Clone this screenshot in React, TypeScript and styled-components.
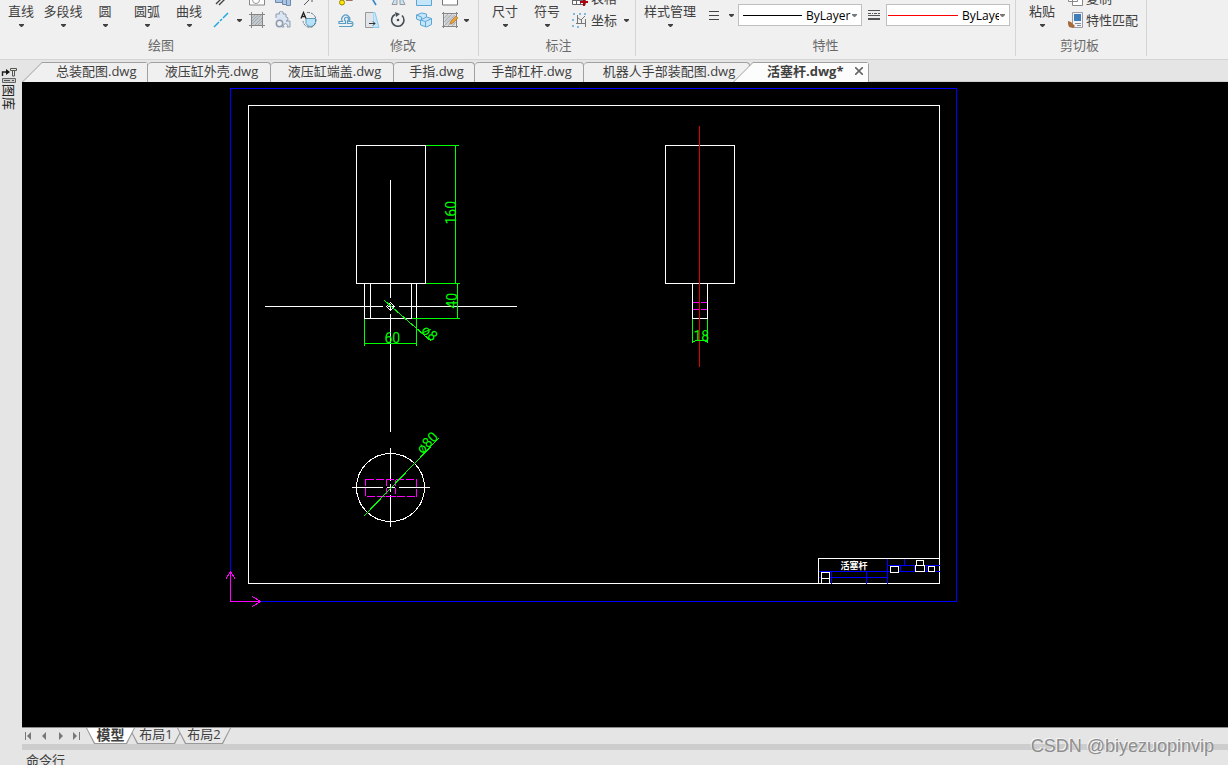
import React from 'react';
import styled, { createGlobalStyle } from 'styled-components';

const GlobalStyle = createGlobalStyle`
  *, *::before, *::after { box-sizing: border-box; }
  body {
    margin: 0;
    overflow: hidden;
    background: #e5e5e5;
    font-family: "Open Sans", "Noto Sans CJK SC", sans-serif;
    font-size: 13px;
    color: #404040;
  }
  button, select { font: inherit; color: inherit; }
  button { border: 0; margin: 0; padding: 0; background: none; white-space: nowrap; }
  svg { display: block; flex: none; }
`;

const Window = styled.div`
  position: relative;
  display: flex;
  flex-direction: column;
  height: 100vh;
  overflow: hidden;
`;

/* ---------- ribbon ---------- */

const Ribbon = styled.header`
  display: flex;
  flex: none;
  height: 60px;
  overflow: hidden;
  background: #f0f0f0;
  border-bottom: 1px solid #d4d4d4;
`;

const Group = styled.section<{ $left?: number; $right?: number }>`
  position: relative;
  display: flex;
  flex-direction: column;
  justify-content: flex-end;
  height: 56px;
  padding: 0 ${p => p.$right ?? 5}px 0 ${p => p.$left ?? 5}px;
  border-right: 1px solid #d4d4d4;
`;

const GroupBody = styled.div`
  display: flex;
  flex: none;
  align-items: flex-end;
  height: 34px;
`;

const GroupTitle = styled.h2`
  flex: none;
  margin: 0;
  height: 22px;
  font-size: 13px;
  font-weight: 400;
  line-height: 22px;
  text-align: center;
  color: #6a6a6a;
`;

const BigButton = styled.button<{ $wide?: boolean }>`
  display: flex;
  flex: none;
  flex-direction: column;
  align-items: center;
  width: ${p => (p.$wide ? 58 : 42)}px;
  height: 32px;
  line-height: 18px;
`;

const CaretBox = styled.span`
  display: flex;
  flex: none;
  align-items: center;
  justify-content: center;
  width: 14px;
  height: 10px;
`;

const IconRows = styled.div<{ $gap?: number }>`
  display: flex;
  flex-direction: column;
  flex: none;
  padding-bottom: 3px;
  padding-left: ${p => p.$gap ?? 0}px;
`;

const IconRow = styled.div`
  display: flex;
  align-items: center;
  height: 22px;
`;

const IconButton = styled.button`
  display: flex;
  align-items: center;
  justify-content: center;
  width: 26px;
  height: 22px;
`;

const LineButton = styled(IconButton)`
  width: 34px;
  gap: 2px;
  padding-left: 4px;
`;

const HatchButton = styled(IconButton)`
  width: 36px;
  padding-left: 4px;
`;

const LabelButton = styled.button`
  display: flex;
  align-items: center;
  gap: 2px;
  height: 22px;
  line-height: 18px;
`;

const Properties = styled.div`
  display: flex;
  align-items: center;
  height: 22px;
  margin-bottom: 8px;
`;

const SmallTool = styled.button<{ $width: number }>`
  display: flex;
  align-items: center;
  justify-content: center;
  gap: 5px;
  width: ${p => p.$width}px;
  height: 22px;
`;

const StyleTool = styled(SmallTool)`
  justify-content: flex-end;
`;

const Combo = styled.label`
  display: flex;
  align-items: center;
  width: 124px;
  height: 22px;
  overflow: hidden;
  background: #fff;
  border: 1px solid #bfbfbf;
`;

const Swatch = styled.span<{ $color: string; $width: number }>`
  flex: none;
  width: ${p => p.$width}px;
  height: 1px;
  margin: 0 4px 0 ${p => (p.$width > 60 ? 1 : 4)}px;
  background: ${p => p.$color};
`;

const Select = styled.select`
  flex: 1;
  min-width: 0;
  height: 20px;
  margin-right: -4px;
  padding: 0;
  appearance: none;
  border: 0;
  background: none;
  font-size: 12px;
  color: #000;
  text-overflow: clip;
`;

const Caret = ({ color = '#404040' }: { color?: string }) => (
  <CaretBox>
    <svg width="5" height="3" viewBox="0 0 5 3" fill={color} aria-hidden="true">
      <path d="M0 0h5v1L3 3H2L0 1z" />
    </svg>
  </CaretBox>
);

const Icon = ({ children }: { children: React.ReactNode }) => (
  <svg width="18" height="18" viewBox="0 0 18 18" fill="none" stroke="#5f6670" aria-hidden="true">
    {children}
  </svg>
);

const blue = '#5ba6d6';
const pale = '#c5e6fa';

const icons = {
  multiline: <Icon><path d="M4 15L14 5M7 16L16 7" stroke="#444" strokeWidth="1.4" /></Icon>,
  region: <Icon><path d="M1.500 2.500h15v13.500h-15z" fill="#fff" stroke="#888" /><circle cx="8" cy="11" r="3.500" stroke="#999" /></Icon>,
  helix: <Icon><path d="M1.500 5.500h7v8h-7zM8.500 8.500h4v7h-4zM12.500 8.500h4v8h-4z" fill="#a9c5e6" stroke="#6d88a8" /></Icon>,
  ray: <Icon><path d="M4 16l8-8M7 8h5v5" stroke="#555" /></Icon>,
  xline: <Icon><path d="M2 16l5-5M8 10l2-2M11 7l5-5" stroke="#22a7e0" strokeWidth="1.500" /></Icon>,
  hatch: (
    <Icon>
      <path d="M4 4h10v10H4z" fill="#c4c9ce" stroke="none" />
      <path d="M4 7l3-3M4 10l6-6M4 13l9-9M7 14l7-7M10 14l4-4" stroke="#a3a9b0" />
      <path d="M3.500 1v16M14.500 1v16M1 3.500h16M1 14.500h16" stroke="#858585" />
    </Icon>
  ),
  cloud: (
    <Icon>
      <path d="M2 7V3h3.500a2 2 0 1 1 3.500 0h3v3a2 2 0 1 1 0 4h4v6h-3a2 2 0 1 0-3 0H8" fill="#dce5f2" stroke="#8c9bb0" />
      <circle cx="5.500" cy="12.500" r="3.200" fill="#f0f0f0" stroke="#8c9bb0" strokeWidth="1.500" />
    </Icon>
  ),
  boundary: (
    <Icon>
      <path d="M6 7.500h9.500v4a5 5 0 0 1-9.500 1z" fill="#b4e2fb" stroke="#5f9cb7" />
      <path d="M7 1.500a8 8 0 0 1 9 7 8 8 0 0 1-4 7.500 7 7 0 0 1-9-6" stroke="#5f7787" strokeDasharray="3 1" />
      <path d="M1 7.500l2.500-6L6 7.500M2 5.500h3" stroke="#222" strokeWidth="1.300" />
    </Icon>
  ),
  move: <Icon><path d="M9 11h6V6h-3" stroke="#843" strokeWidth="1.300" /><circle cx="5" cy="13.500" r="2.500" fill="#ffe500" stroke="#998500" /></Icon>,
  trim: <Icon><path d="M7 6l6 10" stroke="#3186c9" strokeWidth="1.600" /></Icon>,
  mirror: <Icon><path d="M8 5v10.500H3zM11 5v10.500h5z" fill={pale} stroke="#999" /></Icon>,
  array: <Icon><path d="M1.500 2.500h15v14h-15z" fill={pale} stroke={blue} /></Icon>,
  copy: <Icon><path d="M1.500 2.500h15v13.500h-15z" fill="#fff" stroke="#777" /></Icon>,
  offset: (
    <Icon>
      <path d="M2 15.500h11.500a2.500 2.500 0 0 0 0-5H12a4 4 0 1 0-6.500 0H2v2h6.500V10a2 2 0 1 1 2 0v2.500H15" stroke="#579dc5" strokeWidth="1.200" />
    </Icon>
  ),
  stretch: <Icon><path d="M10 1.500h2l4 15h-6z" fill={pale} stroke="#8bcbed" /><path d="M10 1.500H2.500v15H10" fill="#e1e4e8" stroke="#999" /><path d="M6 12.500h6m-2-2l2 2-2 2" stroke="#333" /></Icon>,
  rotate: <Icon><path d="M6 3.500a6.200 6.200 0 1 0 7 1" stroke="#444c55" strokeWidth="1.600" /><path d="M6 1l5 2-4 3z" fill="#444c55" stroke="none" /><circle cx="9" cy="9" r="1.300" fill="#444c55" stroke="none" /></Icon>,
  explode: (
    <Icon>
      <path d="M1.500 4l5-2 5 1v5l-5 2-5-2z" fill={pale} stroke={blue} />
      <path d="M5.500 9l6-3 5 1.500v6l-5 2.500-6-2z" fill={pale} stroke={blue} />
      <path d="M5.500 9l5 1.500 6-3M10.500 10.500V16M1.500 4l5 2v3" stroke={blue} />
    </Icon>
  ),
  editHatch: (
    <Icon>
      <path d="M3.500 3.500h11v11h-11z" fill="#c9ccd0" stroke="none" />
      <path d="M3 7l4-4M3 11l8-8M3 15L14 4M7 15l8-8M11 15l4-4" stroke="#aeb3b8" />
      <path d="M2.500 1v16M15.500 1v16M1 2.500h16M1 15.500h16" stroke="#858585" />
      <path d="M9 13l1-3 5-5 2 2-5 5z" fill="#e9a13b" stroke="#ad6b19" strokeWidth=".6" />
    </Icon>
  ),
  table: <Icon><path d="M1.500 2.500h13v13h-13zM1 6.500h13M1 11.500h13M5.500 3v12M9.500 3v12" fill="#fff" stroke="#666" /><path d="M13 9v8M9 13h8" stroke="#b00010" strokeWidth="2" /></Icon>,
  coord: <Icon><path d="M6.500 4v9M5 12.500h10M14.500 8v8M7 7l3 2 4-4M10.500 9v3" stroke="#777" /><path d="M2 3h2M8 3h2M13 3h3M2 8v2M2 14v2M6 16h2" stroke={blue} strokeWidth="1.500" strokeDasharray="2 1" /></Icon>,
  clone: <Icon><path d="M2.500 1.500h9v11h-9zM6.500 5.500h10v11h-10z" fill="#fff" stroke="#888" /></Icon>,
  match: (
    <Icon>
      <path d="M6.500 1.500h10v15h-10z" fill="#f2f5f8" stroke="#9a9aa4" />
      <path d="M8 3h7v7H8z" fill="#3f7dba" stroke="none" />
      <path d="M9 12.500h6M11 14.500h4" stroke="#889" />
      <path d="M2 10l3 1 4 4-2 2-4-1-1-3z" fill="#a86a38" stroke="none" />
    </Icon>
  ),
};

/* ---------- workspace ---------- */

const Workspace = styled.div`
  display: flex;
  flex: 1;
  min-height: 0;
`;

const SideBar = styled.aside`
  flex: none;
  width: 22px;
  padding: 6px 1px;
  background: #e5e5e5;
`;

const SideButton = styled.button`
  display: flex;
  flex-direction: column;
  align-items: center;
  width: 16px;
  font-size: 13px;
  line-height: 16px;
  color: #222;
`;

const SideLabel = styled.span`
  writing-mode: vertical-rl;
  text-orientation: sideways;
`;

const Main = styled.div`
  display: flex;
  flex: 1;
  flex-direction: column;
  min-width: 0;
`;

const DocTabs = styled.nav`
  display: flex;
  flex: none;
  height: 22px;
  padding-top: 2px;
  background: #e5e5e5;
  border-bottom: 1px solid #d0d0d0;
`;

const DocTab = styled.button<{ $width: number }>`
  flex: none;
  width: ${p => p.$width}px;
  height: 20px;
  padding: 0 0 2px 5px;
  line-height: 17px;
  text-align: center;
  background: #f0f0f0;
  border: 1px solid #a0a0a0;
  border-width: 1px 1px 0 0;
  border-radius: 4px 4px 0 0;
`;

/* Tab with a slanted left edge: a grey shape with the tab colour laid one pixel inside it. */
const SlantTab = styled(DocTab)<{ $active?: boolean }>`
  position: relative;
  z-index: ${p => (p.$active ? 1 : 0)};
  margin-left: ${p => (p.$active ? -17 : 0)}px;
  padding-left: 34px;
  font-weight: ${p => (p.$active ? 700 : 400)};
  border: 0;
  border-radius: 0;
  background: #a0a0a0;
  clip-path: polygon(0 100%, 20px 0, calc(100% - 2px) 0, 100% 2px, 100% 100%);
  &::before {
    content: "";
    position: absolute;
    inset: 1px 1px 0 1px;
    background: ${p => (p.$active ? '#fcfcfc' : '#f0f0f0')};
    clip-path: polygon(0 100%, 19px 0, 100% 0, 100% 100%);
  }
`;

const TabText = styled.span`
  position: relative;
  display: flex;
  align-items: center;
  justify-content: space-between;
  padding-right: 6px;
`;

const Canvas = styled.main`
  flex: 1;
  min-height: 0;
  background: #000;
`;

const Drawing = styled.svg`
  width: 100%;
  height: 100%;
  font-family: "Liberation Sans Narrow", Roboto, "Noto Sans CJK SC", sans-serif;
  font-size: 14px;
  font-weight: 400;
`;

const LayoutBar = styled.nav`
  display: flex;
  flex: none;
  height: 17px;
  border-top: 1px solid #8a8a8a;
  background: #e5e5e5;
`;

const NavButtons = styled.div`
  display: flex;
  align-items: center;
  width: 64px;
`;

const NavButton = styled.button`
  display: flex;
  width: 16px;
  padding-left: 2px;
`;

const LayoutTab = styled.button<{ $active?: boolean }>`
  position: relative;
  z-index: ${p => (p.$active ? 1 : 0)};
  flex: none;
  width: ${p => (p.$active ? 49 : 54)}px;
  height: 16px;
  margin-left: ${p => (p.$active ? 0 : -6)}px;
  padding-bottom: 3px;
  font-weight: ${p => (p.$active ? 700 : 400)};
  font-size: ${p => (p.$active ? 14 : 13)}px;
  line-height: 13px;
  text-align: center;
  background: #999;
  clip-path: polygon(0 0, 100% 0, calc(100% - 8px) 100%, 8px 100%);
  &::before {
    content: "";
    position: absolute;
    inset: 0 1px 1px 1px;
    background: ${p => (p.$active ? '#fff' : '#e8e8e8')};
    clip-path: polygon(0 0, 100% 0, calc(100% - 8px) 100%, 8px 100%);
  }
  span { position: relative; }
`;

const Splitter = styled.div`
  flex: none;
  height: 6px;
  background: #cdcdcd;
`;

const CommandLine = styled.footer`
  flex: none;
  height: 15px;
  padding: 1px 4px 0;
  overflow: hidden;
  line-height: 19px;
`;

const Watermark = styled.div`
  position: absolute;
  right: 14px;
  bottom: 9px;
  z-index: 2;
  font-family: "Liberation Sans", sans-serif;
  font-size: 18px;
  line-height: 20px;
  color: #8e8e8e;
  text-shadow: -1px -1px 0 #f6f6f6;
`;

const PartDrawing = () => (
  <Drawing
    viewBox="21.5 81.5 1206 645"
    preserveAspectRatio="xMinYMin meet"
    fill="none"
    stroke="#fff"
    strokeWidth="1"
    shapeRendering="crispEdges"
    role="img"
    aria-label="活塞杆"
  >
    {/* sheet frame */}
    <path d="M230 88H956V601H230z" stroke="#00f" />
    <path d="M248 105H939V583H248z" />

    {/* front view */}
    <path d="M356 145H425V283H356zM364 283V318M370 283V318M411 283V318M416 283V318M364 318H416" />
    <path d="M390 179V297M390 313V431M264 306H382M398 306H516" />
    <path d="M386 306L390 302L394 306L390 310zM387 306H394M390 303V310" />
    <g stroke="#0f0">
      <path d="M425 145H458M425 283H459M455 145V283M457 283V318M411 318H459M364 318V345M416 318V345M364 343H416" />
      <path d="M384 300L431 341" />
    </g>

    {/* top view */}
    <circle cx="390" cy="487" r="34" />
    <path d="M351 487H382M386 487H394M398 487H429M390 447V480M390 483V491M390 494V526" />
    <path d="M365 479H416V496H365z" stroke="#f0f" strokeDasharray="8 2" />
    <path d="M386 479V496M395 479V496" stroke="#f0f" strokeDasharray="6 2" />
    <path d="M363 516L438 438" stroke="#0f0" />

    {/* side view */}
    <path d="M665 145H734V283H665zM692 283V318H707V283" />
    <path d="M699 125V366" stroke="#e00000" />
    <path d="M692 302H698M700 302H706M692 309H698M700 309H706" stroke="#f0f" />
    <path d="M692 318V342M707 318V342M692 341H694L695 340H704L705 341H707" stroke="#0f0" />

    {/* title block */}
    <path d="M818 571H887M818 577H887M831 571V583M866 571V583M887 558V583M904 558V565M887 565H939M887 571H939M900 565V571M914 565V571M926 565V571" stroke="#00f" />
    <path d="M818 583V558H939" />
    <path d="M821 572H829V583H821zM821 578H829M890 566H898V572H890zM916 560H923V565H916zM915 565H924V571H915zM928 566H934V571H928z" fill="#000" />

    {/* coordinate axes */}
    <path d="M230 571V601H260M225 579L230 571L235 579M252 596L260 601L252 606" stroke="#f0f" />

    <g fill="#0f0" stroke="none">
      <text x="384" y="342">60</text>
      <text x="693" y="340">18</text>
      <text transform="translate(455 224) rotate(-90)">160</text>
      <text transform="translate(456 308) rotate(-90)">40</text>
      <text transform="translate(420 331) rotate(41)">ø8</text>
      <text transform="translate(422 454) rotate(-46)">ø80</text>
    </g>
    <text x="840" y="568" fontSize="9" fontWeight="700" fill="#fff" stroke="none">活塞杆</text>
  </Drawing>
);

const documents = [
  { name: '液压缸外壳.dwg', width: 123 },
  { name: '液压缸端盖.dwg', width: 123 },
  { name: '手指.dwg', width: 81 },
  { name: '手部杠杆.dwg', width: 109 },
  { name: '机器人手部装配图.dwg', width: 166 },
];

const navigation = [
  { name: '第一个', path: 'M1 0h1v8H1zM7 0v8L3 4z' },
  { name: '上一个', path: 'M6 0v8L2 4z' },
  { name: '下一个', path: 'M3 0v8l4-4z' },
  { name: '最后一个', path: 'M1 0v8l4-4zM7 0h1v8H7z' },
];

export default function App() {
  return (
    <Window>
      <GlobalStyle />
      <Ribbon>
        <Group $left={0} $right={6}>
          <GroupBody>
            {['直线', '多段线', '圆', '圆弧', '曲线'].map(name => (
              <BigButton key={name}>{name}<Caret /></BigButton>
            ))}
            <IconRows>
              <IconRow>
                <LineButton aria-label="多线">{icons.multiline}<CaretBox /></LineButton>
                <IconButton aria-label="面域">{icons.region}</IconButton>
                <IconButton aria-label="螺旋">{icons.helix}</IconButton>
                <IconButton aria-label="射线">{icons.ray}</IconButton>
              </IconRow>
              <IconRow>
                <LineButton aria-label="构造线">{icons.xline}<Caret /></LineButton>
                <IconButton aria-label="填充">{icons.hatch}</IconButton>
                <IconButton aria-label="云线">{icons.cloud}</IconButton>
                <IconButton aria-label="边界">{icons.boundary}</IconButton>
              </IconRow>
            </IconRows>
          </GroupBody>
          <GroupTitle>绘图</GroupTitle>
        </Group>

        <Group $left={4} $right={5}>
          <GroupBody>
            <IconRows>
              <IconRow>
                <IconButton aria-label="移动">{icons.move}</IconButton>
                <IconButton aria-label="修剪">{icons.trim}</IconButton>
                <IconButton aria-label="镜像">{icons.mirror}</IconButton>
                <IconButton aria-label="阵列">{icons.array}</IconButton>
                <IconButton aria-label="复制对象">{icons.copy}</IconButton>
              </IconRow>
              <IconRow>
                <IconButton aria-label="偏移">{icons.offset}</IconButton>
                <IconButton aria-label="拉伸">{icons.stretch}</IconButton>
                <IconButton aria-label="旋转">{icons.rotate}</IconButton>
                <IconButton aria-label="分解">{icons.explode}</IconButton>
                <HatchButton aria-label="编辑填充">{icons.editHatch}<Caret /></HatchButton>
              </IconRow>
            </IconRows>
          </GroupBody>
          <GroupTitle>修改</GroupTitle>
        </Group>

        <Group $left={5} $right={2}>
          <GroupBody>
            <BigButton>尺寸<Caret /></BigButton>
            <BigButton>符号<Caret /></BigButton>
            <IconRows $gap={3}>
              <IconRow><LabelButton>{icons.table}表格</LabelButton></IconRow>
              <IconRow><LabelButton>{icons.coord}坐标<Caret /></LabelButton></IconRow>
            </IconRows>
          </GroupBody>
          <GroupTitle>标注</GroupTitle>
        </Group>

        <Group $left={5} $right={5}>
          <GroupBody>
            <BigButton $wide>样式管理<Caret /></BigButton>
            <Properties>
              <StyleTool $width={39} aria-label="线宽">
                <svg width="10" height="9" viewBox="0 0 10 9" fill="#444" aria-hidden="true">
                  <path d="M0 0h10v1H0zM0 4h10v1H0zM0 8h10v1H0z" />
                </svg>
                <Caret />
              </StyleTool>
              <Combo>
                <Swatch $color="#000" $width={59} />
                <Select aria-label="线型"><option>ByLayer</option></Select>
                <Caret color="#777" />
              </Combo>
              <SmallTool $width={24} aria-label="线型管理">
                <svg width="12" height="11" viewBox="0 0 12 11" fill="#555" aria-hidden="true">
                  <path d="M0 0h12v1H0zM0 3h3v1H0zM4 3h1v1H4zM6 3h3v1H6zM10 3h2v1h-2zM0 5h12v1H0zM0 8h12v2H0z" />
                </svg>
              </SmallTool>
              <Combo>
                <Swatch $color="#f00" $width={70} />
                <Select aria-label="颜色"><option>ByLayer</option></Select>
                <Caret color="#777" />
              </Combo>
            </Properties>
          </GroupBody>
          <GroupTitle>特性</GroupTitle>
        </Group>

        <Group $left={5} $right={8}>
          <GroupBody>
            <BigButton>粘贴<Caret /></BigButton>
            <IconRows $gap={3}>
              <IconRow><LabelButton>{icons.clone}复制</LabelButton></IconRow>
              <IconRow><LabelButton>{icons.match}特性匹配</LabelButton></IconRow>
            </IconRows>
          </GroupBody>
          <GroupTitle>剪切板</GroupTitle>
        </Group>
      </Ribbon>

      <Workspace>
        <SideBar>
          <SideButton>
            <svg width="16" height="18" viewBox="0 0 16 18" fill="none" stroke="#222" aria-hidden="true">
              <path d="M1.500 10V6h4" strokeWidth="1.400" />
              <path d="M5 3l4 3-4 3z" fill="#111" stroke="none" />
              <path d="M9.500 2.500h6v2h-6zM11.500 5v5h2V5" fill="#e8e8d8" stroke="#555" />
              <path d="M1.500 12.500h13v4h-13z" fill="#ccc" stroke="#666" />
              <path d="M3 14.500h6M11 14.500h2" stroke="#555" />
            </svg>
            <SideLabel>图库</SideLabel>
          </SideButton>
        </SideBar>
        <Main>
          <DocTabs>
            <SlantTab $width={126}><TabText>总装配图.dwg</TabText></SlantTab>
            {documents.map(d => (
              <DocTab key={d.name} $width={d.width}>{d.name}</DocTab>
            ))}
            <SlantTab $width={136} $active>
              <TabText>
                活塞杆.dwg*
                <svg width="8" height="8" viewBox="0 0 8 8" fill="none" stroke="#666" strokeWidth="1.600" aria-hidden="true">
                  <path d="M0 0l8 8M8 0L0 8" />
                </svg>
              </TabText>
            </SlantTab>
          </DocTabs>
          <Canvas><PartDrawing /></Canvas>
          <LayoutBar>
            <NavButtons>
              {navigation.map(n => (
                <NavButton key={n.name} aria-label={n.name}>
                  <svg width="8" height="8" viewBox="0 0 8 8" fill="#777" aria-hidden="true">
                    <path d={n.path} />
                  </svg>
                </NavButton>
              ))}
            </NavButtons>
            <LayoutTab $active><span>模型</span></LayoutTab>
            <LayoutTab><span>布局1</span></LayoutTab>
            <LayoutTab><span>布局2</span></LayoutTab>
          </LayoutBar>
          <Splitter />
          <CommandLine>命令行</CommandLine>
        </Main>
      </Workspace>
      <Watermark>CSDN @biyezuopinvip</Watermark>
    </Window>
  );
}
